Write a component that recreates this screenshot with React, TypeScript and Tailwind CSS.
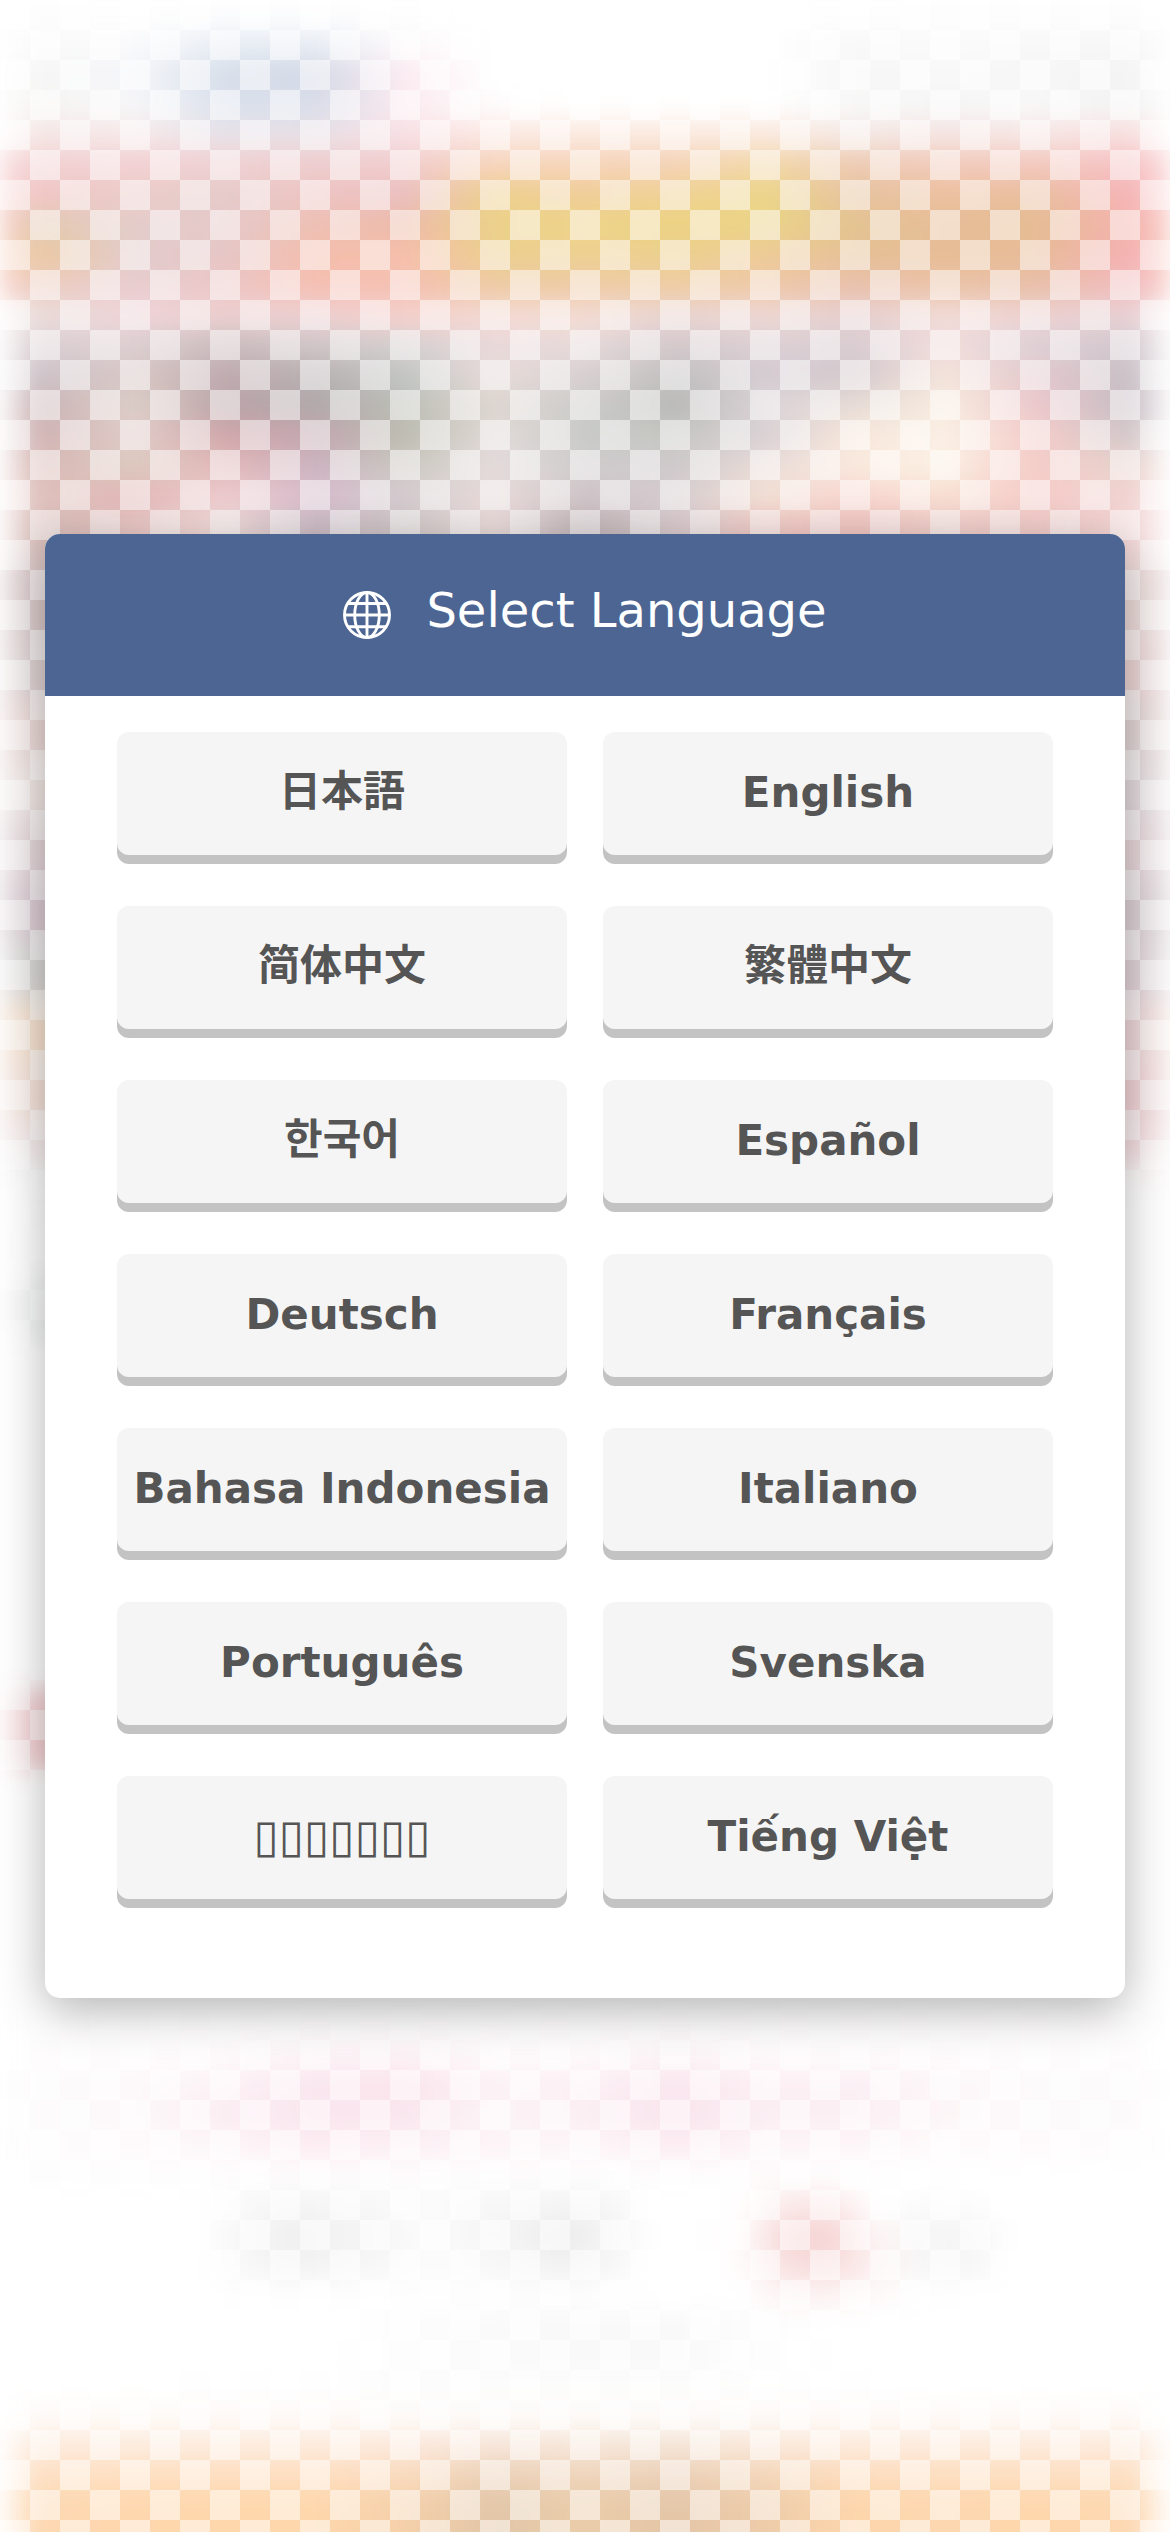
// The Thai label has no glyphs in the UI font, so it shows as seven empty boxes.
const MISSING_GLYPHS = '▯▯▯▯▯▯▯';

const LANGUAGES = [
  '日本語',
  'English',
  '简体中文',
  '繁體中文',
  '한국어',
  'Español',
  'Deutsch',
  'Français',
  'Bahasa Indonesia',
  'Italiano',
  'Português',
  'Svenska',
  MISSING_GLYPHS,
  'Tiếng Việt',
];

const CJK = /[\u3000-\u9fff\uac00-\ud7af]/;

interface Band {
  h: number;
  colors: string;
  edge?: string;
}

// Backdrop strips, top to bottom. Colours run left to right at equal steps.
const BANDS: Band[] = [
  { h: 30, colors: 'fdfdfd fefefe fdfdfe fdfdfe fefefe ffffff ffffff ffffff ffffff fefefe fdfdfd fdfdfd fdfdfd' },
  { h: 30, colors: 'fafafa fafafc e8edf4 e8edf4 fdf9fb ffffff ffffff ffffff ffffff f8f8f8 fbfbfb f8f8f8 f7f7f7' },
  { h: 30, colors: 'f6f6f6 f4f5f9 d6dee9 d2d8e5 fcebf1 ffffff ffffff ffffff ffffff f7f7f7 f8f8f8 f6f6f6 f4f4f4' },
  { h: 30, colors: 'f6f5f3 f7f7f9 dae1ed d9deea fbeaf0 fefdfd ffffff ffffff ffffff f8f8f8 f6f6f6 f8f8f8 f4f4f4' },
  { h: 30, colors: 'f5e6e4 f6e8e8 e8e2e8 e8e0e5 f8e0e4 fbe8e2 fbe9e0 fbe9df fae8de f4e8e4 f5e4e2 f6e6e4 f8dedd' },
  { h: 30, edge: 'fbdfe0', colors: 'f2d0d2 f2d0d2 f1d0d2 efcccd f1cccd f6d4bc f6d4ba f4d2b6 f2d8a8 edcab2 f2cabb f3c8be f6c2c4' },
  { h: 30, edge: 'fbdcdc', colors: 'f0c6c4 ebccc9 e4cbc9 eec4c2 ebbfc0 eed08c f0cd98 f0d294 edd588 e6c3a0 edc09f e9bf9f f5b4b6' },
  { h: 30, edge: 'fad2cc', colors: 'e2cab2 e4cccb e6c9ca eec0b4 ecbaa8 ecd28a eed48a ecd282 ead488 e4c390 e6bd98 e5bc92 f4b4ac' },
  { h: 30, edge: 'fad8cc', colors: 'ebc8a2 e2cccb e6c6c6 f4beac f6bfac eccf8e eed092 ecd08e eecb98 e5c096 e7bd96 e8bc98 f4b0b2' },
  { h: 30, edge: 'fad6d0', colors: 'ecccc0 e8cdd0 ecc6c6 f6bfb2 f4c0b2 eecaa4 eecaa6 efcda4 eec8a8 eac0ac ebc3a8 e8bfa8 f2bcbe' },
  { h: 30, colors: 'eadcda f0d4d8 eed0d0 eed0d2 f6d0cc f4dad4 f4dcd4 e9d4d2 efd8d4 e6cfcf f2dcd8 eed2d2 e8d0d4' },
  { h: 30, colors: 'dccfd3 dccfd1 cabcbe d0c6c8 d4d0d0 ead8da e6dada d4c8cc dcd0d4 d8ccd2 f2dcdc ddd0d6 d2c8ce' },
  { h: 30, colors: 'ccc2c8 d8c6c4 bfaaae b8b0b2 c2c6c3 e8dcda d8d0d0 c2c0c0 d4ccd2 d4c8cc f4e4dc e4c8cc c9c0c6' },
  { h: 30, colors: 'ccb4b6 dccfc8 bba4a8 b0a8aa bcbeb6 ddd6d0 ccccca b8b8b6 dcd4d8 e6dcd6 f8ecdf ecc8cc c8bdc4' },
  { h: 30, colors: 'd0b4b4 e2ccca d0a6aa c4a6b0 bcbcb0 e2dad8 c8cac8 c6c8c2 d8d0d4 f8e6da fbf0e6 f4ccc8 d4c8ca' },
  { h: 30, colors: 'd8bab6 dccbc0 e2b8b8 cbb4c0 cbc8c0 e4dcdc cfcccc cec8cb eadcd8 faeade fbf0e4 f4ccc8 e8d2cc' },
  { h: 30, colors: 'dfc0bc e2b6b6 eecace d8bccc d4ccd0 e8dad8 cfc4c8 d6cdd0 f2e0d4 f8d6d0 f8e0d2 f6ccc8 f0d2d0' },
  { h: 50, colors: 'd8bcb8 eac8c6 f2dedc ccbcc6 d2c8c8 ecdedd c4b6ba dacccf f4ccc8 f2c6c2 f2d0cc f2ccca f4d6d6' },
  // behind the card only the two ends show
  { h: 80, edge: 'f4eeee', colors: 'd8c6c6 ecdad8' },
  { h: 60, edge: 'f4efef', colors: 'dccece ecd2d2' },
  { h: 60, edge: 'f6f0ee', colors: 'ead6d4 e2d4d4' },
  { h: 60, edge: 'f5f1f1', colors: 'f0e6e2 e2d8dc' },
  { h: 60, edge: 'f0ecee', colors: 'e4d4d8 e6d4d8' },
  { h: 60, edge: 'ebe7ea', colors: 'dac8d0 dcd0d4' },
  { h: 60, edge: 'f0f0f0', colors: 'd6d4d2 e0d0d6' },
  { h: 60, edge: 'faf2ea', colors: 'f6e0cc ecd4d8' },
  { h: 60, edge: 'f9f2ee', colors: 'f4e0d6 f0d0d4' },
  { h: 40, edge: 'faf6f6', colors: 'f6eaea f4dadd' },
  { h: 30, colors: 'fafafa fcf6f6' },
  { h: 90, colors: 'fefefe ffffff' },
  { h: 60, colors: 'f3f4f4 ffffff' },
  { h: 350, colors: 'ffffff ffffff' },
  { h: 80, edge: 'ffffff', colors: 'f3cdd0 ffffff' },
  { h: 240, colors: 'ffffff ffffff' },
  // below the card
  { h: 30, colors: 'fffefe fffdfe' },
  { h: 30, colors: 'fefcfd fefcfd fefafb fcf3f7 fcf2f6 fefafb fefafb fcf4f7 fefafb fefbfc fefbfc fefcfd fefcfd' },
  { h: 30, colors: 'fdfbfc fdf8fa fcf2f6 fae6ee fbe4ec fcf2f6 fcf0f5 fae6ee fceff4 fbeff4 fdf6f8 fdfafb fdfafb' },
  { h: 30, colors: 'fdfbfc fdf8fa fbecf2 fae6ee fae6ee fcf4f7 fbeef3 fae4ed fbeef3 fceff4 fdf6f8 fdfafb fdfafb' },
  { h: 30, colors: 'fefcfc fefafb fdf6f8 fcecf2 fcf0f5 fdf4f7 fdf6f8 fcedf2 fdf5f8 fdf5f8 fefafb fefafb fefcfd' },
  { h: 30, colors: 'fefdfd fefdfd fefdfd fefcfd fefcfd fefdfd fefdfd fefdfd fefcfc ffffff ffffff ffffff ffffff' },
  { h: 30, colors: 'ffffff ffffff ffffff ffffff ffffff f9f9f9 f5f5f5 f6f6f6 f9f9f9 fcfcfc f8f8f8 f6f6f6 f4f4f4 f6f6f6 ffffff ffffff ffffff fbe8e8 fbe8e8 ffffff fbfbfb fcfcfc ffffff ffffff ffffff ffffff' },
  { h: 30, colors: 'ffffff ffffff ffffff ffffff fefefe f6f6f6 efefef f2f2f2 f5f5f5 fcfcfc f7f7f7 f3f3f3 ebebeb f3f3f3 ffffff ffffff fffafa f6d6d6 f6d4d4 fef6f6 f5f5f5 f5f5f5 ffffff ffffff ffffff ffffff' },
  { h: 30, colors: 'ffffff ffffff ffffff ffffff ffffff f7f7f7 f3f3f3 f4f4f4 f8f8f8 fcfcfc f9f9f9 f6f6f6 f1f1f1 f6f6f6 ffffff ffffff fffcfc f8dede f8dcdc fdf2f2 f7f7f7 f6f6f6 ffffff ffffff ffffff ffffff' },
  { h: 30, colors: 'ffffff ffffff ffffff ffffff ffffff fefefe fefefe fefefe fefefe fefefe fefefe fdfdfd fdfdfd fefefe ffffff ffffff fffefe fdf4f4 fdf3f3 fefafa fefefe fefefe ffffff ffffff ffffff ffffff' },
  { h: 60, colors: 'ffffff ffffff ffffff ffffff fdfdfd fafafa f9f9f9 f9f9f9 fdfdfd ffffff ffffff ffffff ffffff' },
  { h: 32, colors: 'ffffff ffffff fefefe fefefe fcfcfc fcfcfc fcfcfc fcfcfc fefefe fefefe ffffff ffffff ffffff' },
  { h: 30, colors: 'fefaf8 fefbf8 fefaf8 fefaf8 fefbf9 fefbf9 fefbf9 fefbf9 fefaf8 fefaf8 fefaf8 fefaf8 fefaf8' },
  { h: 30, colors: 'fdeadb fdebdc fdebdc fdeadb fce8da f6e4d8 f6e6d8 f4e4d6 fae7d8 fdeadb fdeadb fdeadb fdeadb' },
  { h: 30, colors: 'fddfc2 fedfc0 fedebf fedebf f9dabc ead0b6 efd4ba eacfb6 f3d6b9 fddcbc fddebf fddebf fddfc2' },
  { h: 90, colors: 'fdd8b2 fed7ae fed7ac fed7ac f5d0aa e2c6a8 ebcdaa e4c6a8 eeccaa fdd6ac fdd7b0 fed7ac fdd8b2' },
];

function bandGradient({ colors, edge = 'ffffff' }: Band) {
  const list = colors.split(' ');
  // two-colour bands hold flat ends instead of spreading over the width
  const at = (i: number) => (list.length === 2 ? [4, 96][i] : ((i + 0.5) / list.length) * 100);
  const inner = list.map((c, i) => ({ c, pos: at(i) })).filter(s => s.pos > 3 && s.pos < 97);
  const stops = inner.map(s => `#${s.c} ${s.pos}%`);
  return `linear-gradient(90deg, #${edge} 0%, #${list[0]} 3%, ${stops.join(', ')}, #${list[list.length - 1]} 97%, #${edge} 100%)`;
}

function Backdrop() {
  return (
    <div className="absolute inset-0 overflow-hidden bg-white">
      <div className="flex flex-col blur-[12px]">
        {BANDS.map((band, i) => (
          <div key={i} className="shrink-0" style={{ height: band.h, backgroundImage: bandGradient(band) }} />
        ))}
      </div>
      <div className="absolute inset-0 bg-[conic-gradient(transparent_25%,rgba(255,255,255,0.5)_0_50%,transparent_0_75%,rgba(255,255,255,0.5)_0)] bg-[length:60px_60px]" />
    </div>
  );
}

function GlobeIcon() {
  return (
    <svg className="w-12 h-12 shrink-0" viewBox="0 0 48 48" fill="none" stroke="currentColor" strokeWidth="2.9">
      <circle cx="24" cy="24" r="22.5" />
      <ellipse cx="24" cy="24" rx="12.3" ry="22.5" />
      <path d="M24 1.5v45M1.5 24h45M5 12.5h38M5 35.7h38" />
    </svg>
  );
}

function labelStyle(name: string) {
  if (name === MISSING_GLYPHS) return 'text-[46px] font-normal pb-0.5';
  return CJK.test(name) ? 'text-[42px] font-bold pb-1' : 'text-[42px] font-bold pb-0.5';
}

export default function App() {
  return (
    <div className="relative w-[1170px] h-[2532px] overflow-hidden flex items-center justify-center font-['DejaVu_Sans','Noto_Sans_CJK_JP',sans-serif]">
      <Backdrop />

      <div className="relative w-[1080px] h-[1464px] rounded-[15px] bg-white shadow-[0_12px_48px_rgba(0,0,0,0.3)]">
        {/* Header */}
        <div className="h-[162px] rounded-t-[15px] bg-[#4c6593] text-white flex justify-center">
          <div className="pt-[57px]">
            <GlobeIcon />
          </div>
          <h1 className="ml-[35px] pt-12 text-[48px] leading-[56px] whitespace-nowrap">Select Language</h1>
        </div>

        {/* Language buttons */}
        <div className="grid grid-cols-2 gap-x-9 gap-y-[51px] px-[72px] pt-9">
          {LANGUAGES.map(name => (
            <button
              key={name}
              className={`h-[123px] rounded-xl bg-[#f5f5f5] shadow-[0_9px_0_#c3c3c3] text-[#555] whitespace-nowrap ${labelStyle(name)}`}
            >
              {name}
            </button>
          ))}
        </div>
      </div>
    </div>
  );
}
